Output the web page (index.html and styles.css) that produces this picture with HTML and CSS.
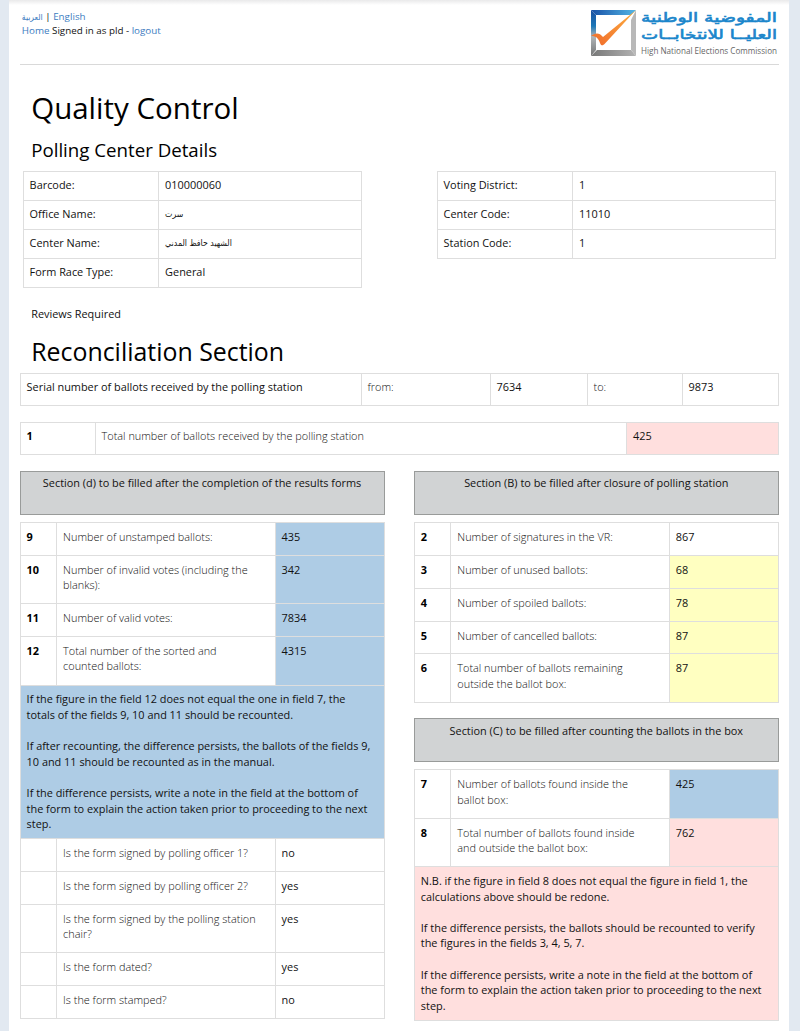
FILE: index.html
```html
<!DOCTYPE html>
<html lang="en">
<head>
<meta charset="utf-8">
<title>Quality Control</title>
<link rel="stylesheet" href="styles.css">
</head>
<body>
<div class="page">
  <header class="header">
    <div class="nav">
      <div><a class="ar-link" lang="ar">العربية</a> | <a>English</a></div>
      <div><a>Home</a> Signed in as pld - <a>logout</a></div>
    </div>
    <svg class="logo" width="189" height="56" viewBox="0 0 189 56">
      <defs>
        <linearGradient id="frame" x1="0" y1="0" x2="0" y2="1">
          <stop offset="0" stop-color="#1a4fa0"/><stop offset=".35" stop-color="#1c78b8"/><stop offset=".58" stop-color="#b0b5b8"/><stop offset="1" stop-color="#757575"/>
        </linearGradient>
        <linearGradient id="side" x1="0" y1="0" x2="1" y2="0">
          <stop offset="0" stop-color="#1750a5"/><stop offset="1" stop-color="#55b7e6"/>
        </linearGradient>
        <linearGradient id="gray" x1="0" y1="0" x2="1" y2="0">
          <stop offset="0" stop-color="#777"/><stop offset="1" stop-color="#b2b2b2"/>
        </linearGradient>
        <linearGradient id="tick" x1="0" y1="1" x2="1" y2="0">
          <stop offset="0" stop-color="#f06a2a"/><stop offset="1" stop-color="#fdb040"/>
        </linearGradient>
      </defs>
      <path d="M1 2L6 7V42L1 48Z" fill="url(#frame)"/>
      <path d="M1 2H46L41 7H6Z" fill="url(#side)"/>
      <path d="M1 48L7 42H41L46 48Z" fill="url(#gray)"/>
      <path d="M46 2V48L41 42V12Z" fill="#b8b8b8"/>
      <path d="M1 28C5 25 9 24 13 29L46 2L15 35.500C13 38 11 38 10 35C8 29 5 28 1 28Z" fill="url(#tick)"/>
      <text class="logo-ar" lang="ar" x="51" y="14" textLength="136" lengthAdjust="spacingAndGlyphs">المفوضية الوطنية</text>
      <text class="logo-ar" lang="ar" x="51" y="31" textLength="136" lengthAdjust="spacingAndGlyphs">العليــا للانتخابــات</text>
      <text class="logo-en" x="51" y="45.500" textLength="136" lengthAdjust="spacingAndGlyphs">High National Elections Commission</text>
    </svg>
  </header>

  <h1>Quality Control</h1>
  <h3>Polling Center Details</h3>

  <div class="details">
    <div class="grid info">
      <div>Barcode:</div><div>010000060</div>
      <div>Office Name:</div><div class="ar" lang="ar">سرت</div>
      <div>Center Name:</div><div class="ar" lang="ar">الشهيد حافظ المدني</div>
      <div>Form Race Type:</div><div>General</div>
    </div>
    <div class="grid info">
      <div>Voting District:</div><div>1</div>
      <div>Center Code:</div><div>11010</div>
      <div>Station Code:</div><div>1</div>
    </div>
  </div>

  <p class="reviews">Reviews Required</p>
  <h2>Reconciliation Section</h2>

  <div class="grid serial">
    <div>Serial number of ballots received by the polling station</div>
    <div class="light">from:</div><div>7634</div>
    <div class="light">to:</div><div>9873</div>
  </div>
  <div class="grid total">
    <div class="num">1</div>
    <div class="light">Total number of ballots received by the polling station</div>
    <div class="pink">425</div>
  </div>

  <div class="columns">
    <section>
      <div class="banner">Section (d) to be filled after the completion of the results forms</div>
      <div class="grid form form-d">
        <div class="num">9</div><div class="light">Number of unstamped ballots:</div><div class="blue">435</div>
        <div class="num">10</div><div class="light">Number of invalid votes (including the<br>blanks):</div><div class="blue">342</div>
        <div class="num">11</div><div class="light">Number of valid votes:</div><div class="blue">7834</div>
        <div class="num">12</div><div class="light">Total number of the sorted and<br>counted ballots:</div><div class="blue">4315</div>
        <div class="note blue">If the figure in the field 12 does not equal the one in field 7, the<br>totals of the fields 9, 10 and 11 should be recounted.<br><br>If after recounting, the difference persists, the ballots of the fields 9,<br>10 and 11 should be recounted as in the manual.<br><br>If the difference persists, write a note in the field at the bottom of<br>the form to explain the action taken prior to proceeding to the next<br>step.</div>
        <div></div><div class="light">Is the form signed by polling officer 1?</div><div>no</div>
        <div></div><div class="light">Is the form signed by polling officer 2?</div><div>yes</div>
        <div></div><div class="light">Is the form signed by the polling station<br>chair?</div><div>yes</div>
        <div></div><div class="light">Is the form dated?</div><div>yes</div>
        <div></div><div class="light">Is the form stamped?</div><div>no</div>
      </div>
    </section>
    <section>
      <div class="banner">Section (B) to be filled after closure of polling station</div>
      <div class="grid form form-b">
        <div class="num">2</div><div class="light">Number of signatures in the VR:</div><div>867</div>
        <div class="num">3</div><div class="light">Number of unused ballots:</div><div class="yellow">68</div>
        <div class="num">4</div><div class="light">Number of spoiled ballots:</div><div class="yellow">78</div>
        <div class="num">5</div><div class="light">Number of cancelled ballots:</div><div class="yellow">87</div>
        <div class="num">6</div><div class="light">Total number of ballots remaining<br>outside the ballot box:</div><div class="yellow">87</div>
      </div>
      <div class="banner banner-c">Section (C) to be filled after counting the ballots in the box</div>
      <div class="grid form form-c">
        <div class="num">7</div><div class="light">Number of ballots found inside the<br>ballot box:</div><div class="blue">425</div>
        <div class="num">8</div><div class="light">Total number of ballots found inside<br>and outside the ballot box:</div><div class="pink">762</div>
        <div class="note pink">N.B. if the figure in field 8 does not equal the figure in field 1, the<br>calculations above should be redone.<br><br>If the difference persists, the ballots should be recounted to verify<br>the figures in the fields 3, 4, 5, 7.<br><br>If the difference persists, write a note in the field at the bottom of<br>the form to explain the action taken prior to proceeding to the next<br>step.</div>
      </div>
    </section>
  </div>
</div>
</body>
</html>
```

FILE: styles.css
```css
* { box-sizing: border-box; }
html { background: #e2e9f1; }
body {
  margin: 0;
  height: 1031px;
  overflow: hidden;
  padding: 0 11px 0 9px;
  font: 10.9px/15.6px "Open Sans", "DejaVu Sans", sans-serif;
  color: #111;
  white-space: nowrap;
}
.page {
  height: 1031px;
  padding: 0 10.2px 0 10.6px;
  background: linear-gradient(#e9e9ea, #fff 5px);
}
.header {
  display: flex;
  justify-content: space-between;
  height: 65px;
  padding-top: 8px;
  border-bottom: 1px solid #d9d9d9;
}
.nav { padding: 2px 0 0 2.2px; font-size: 9.8px; line-height: 14px; }
.nav a { color: #3c7cbf; }
.nav .ar-link { font: 8.5px "DejaVu Sans Condensed", "DejaVu Sans", sans-serif; }
.logo { display: block; }
.logo-ar { font: 13.5px "DejaVu Sans", sans-serif; fill: #1b86cb; stroke: #1b86cb; stroke-width: .6px; }
.logo-en { font: 9.7px "Open Sans", sans-serif; fill: #666; }
h1, h2, h3 { margin: 0; padding-left: 11.6px; font-weight: 400; color: #000; }
h1 { height: 72px; padding-top: 21.5px; font-size: 29.5px; line-height: 42px; }
h3 { height: 34px; font-size: 18.7px; line-height: 26px; }
.details { display: flex; gap: 75px; height: 117px; padding-left: 3px; align-items: flex-start; }
.grid {
  display: grid;
  border: solid #dedede;
  border-width: 0 1px 1px 0;
}
.grid > div {
  border: solid #dedede;
  border-width: 1px 0 0 1px;
  padding: 5.8px 0 0 6px;
}
.info { width: 339px; grid-template-columns: 135.5px 1fr; grid-auto-rows: 28.9px; }
.grid.info > div { padding-top: 5.3px; }
.info .ar { font: 8.7px/16.4px "DejaVu Sans Condensed", "DejaVu Sans", sans-serif; }
.reviews { margin: 0; height: 49px; padding: 18px 0 0 11.6px; }
h2 { height: 36px; font-size: 24.9px; line-height: 29px; }
.serial { height: 33px; grid-template-columns: 341px 129px 97px 95px 1fr; }
.total { height: 33px; margin-top: 16px; grid-template-columns: 75px 531.5px 1fr; }
.grid.serial > div, .grid.total > div { padding-top: 5.4px; }
.num { font-weight: 700; color: #000; }
.grid > .light { font-weight: 300; color: #111; }
.pink { background: #ffdfde; }
.blue { background: #aecce5; }
.yellow { background: #ffffc1; }
.columns { display: grid; grid-template-columns: 365px 365px; justify-content: space-between; margin-top: 16px; }
.banner {
  height: 44px;
  margin-bottom: 7px;
  border: 1px solid #999b9a;
  background: #d1d3d4;
  padding-top: 3.4px;
  text-align: center;
}
.banner-c { margin-top: 15.6px; }
.form { grid-template-columns: 36.5px 218.5px 1fr; }
.form-d { grid-template-rows: 33px 48.3px 32.8px 48.5px 153.5px 33px 33px 48px 33px 32.8px; }
.form-b { grid-template-rows: 33px 33px 32.8px 32.5px 48.5px; }
.form-c { grid-template-rows: 48.5px 48.3px 153.5px; }
.note { grid-column: 1 / -1; }
```
